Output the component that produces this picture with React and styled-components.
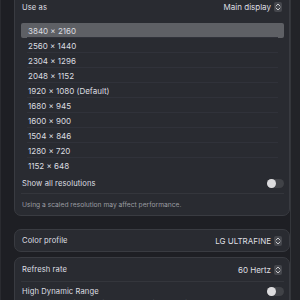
import React, { useState } from "react";
import styled, { createGlobalStyle } from "styled-components";

const resolutions = [
  "3840 × 2160",
  "2560 × 1440",
  "2304 × 1296",
  "2048 × 1152",
  "1920 × 1080 (Default)",
  "1680 × 945",
  "1600 × 900",
  "1504 × 846",
  "1280 × 720",
  "1152 × 648",
];

function Stepper() {
  return (
    <StepBox>
      <svg width="6" height="8" viewBox="0 0 6 8" fill="none">
        <path d="M1 3 L3 1 L5 3" stroke="#d6d6d8" strokeWidth="0.9" strokeLinecap="round" strokeLinejoin="round" />
        <path d="M1 5 L3 7 L5 5" stroke="#d6d6d8" strokeWidth="0.9" strokeLinecap="round" strokeLinejoin="round" />
      </svg>
    </StepBox>
  );
}

function App() {
  const [selected, setSelected] = useState(0);
  const [showAll, setShowAll] = useState(false);
  const [hdr, setHdr] = useState(false);

  return (
    <>
      <GlobalStyle />
      <Page>
        <Content>
          <Card>
            <Row h={26} pad="6px 2px 0 1px">
              <Label>Use as</Label>
              <Value>
                Main display <Stepper />
              </Value>
            </Row>
            <List>
              {resolutions.map((r, i) => (
                <ListItem key={r} active={i === selected} onClick={() => setSelected(i)}>
                  {r}
                </ListItem>
              ))}
            </List>
            <Row h={20}>
              <Label>Show all resolutions</Label>
              <Toggle on={showAll} onClick={() => setShowAll(!showAll)} />
            </Row>
            <Caption>Using a scaled resolution may affect performance.</Caption>
          </Card>

          <Card top={13}>
            <Row h={21} pad="0 2px 0 1px">
              <Label>Color profile</Label>
              <Value>
                LG ULTRAFINE <Stepper />
              </Value>
            </Row>
          </Card>

          <Card top={5}>
            <Row h={24} pad="0 2px 0 1px" divided>
              <Label>Refresh rate</Label>
              <Value>
                60 Hertz <Stepper />
              </Value>
            </Row>
            <Row h={30} align="flex-start" pad="5px 0 0 1px">
              <HdrText>
                <Label>High Dynamic Range</Label>
                <Sub>Automatically adjust the display to show high dynamic range content.</Sub>
              </HdrText>
              <Toggle on={hdr} onClick={() => setHdr(!hdr)} />
            </Row>
          </Card>
        </Content>
        <ScrollTrack />
      </Page>
    </>
  );
}

export default App;

const GlobalStyle = createGlobalStyle`
  html, body {
    margin: 0;
    padding: 0;
    background: #1e1f24;
    font-family: Inter, "Liberation Sans", sans-serif;
    -webkit-font-smoothing: antialiased;
  }
`;

const Page = styled.div`
  width: 300px;
  height: 300px;
  overflow: hidden;
  display: flex;
  background: #1e1f24;
  border-left: 1px solid #2a2b30;
  box-sizing: border-box;
`;

const Content = styled.div`
  flex: 1;
  padding-left: 13px;
  margin-top: -10px;
  display: flex;
  flex-direction: column;
`;

const ScrollTrack = styled.div`
  width: 9px;
  border-left: 1px solid #34363b;
  background: #222328;
`;

const Card = styled.div`
  margin-top: ${(p) => p.top || 0}px;
  background: #292b31;
  border: 1px solid #393b41;
  border-radius: 7px;
  padding: 0 5px 0 6px;
  flex-shrink: 0;
`;

const Row = styled.div`
  display: flex;
  align-items: ${(p) => p.align || "center"};
  justify-content: space-between;
  height: ${(p) => p.h}px;
  padding: ${(p) => p.pad || "0 0 0 1px"};
  box-sizing: border-box;
  border-bottom: ${(p) => (p.divided ? "1px solid #34363c" : "none")};
`;

const Label = styled.span`
  color: #dedfe2;
  font-size: 7.6px;
  letter-spacing: 0.1px;
`;

const Value = styled.span`
  display: flex;
  align-items: center;
  gap: 3px;
  color: #dedfe2;
  font-size: 8px;
`;

const StepBox = styled.span`
  display: inline-flex;
  align-items: center;
  justify-content: center;
  width: 8px;
  height: 10px;
  border-radius: 2px;
  background: #45474d;
`;

const List = styled.div`
  margin-top: 6px;
  display: flex;
  flex-direction: column;
`;

const ListItem = styled.div`
  height: 15px;
  display: flex;
  align-items: center;
  padding-left: 7px;
  font-size: 8px;
  color: #dcdde0;
  cursor: default;
  position: relative;
  background: ${(p) => (p.active ? "#5e6065" : "transparent")};
  border-radius: ${(p) => (p.active ? "2px" : "0")};
  &::after {
    content: "";
    position: absolute;
    left: 6px;
    right: 6px;
    bottom: 0;
    border-bottom: 1px solid #30323a;
  }
  &:last-child::after {
    display: none;
  }
`;

const Toggle = styled.div`
  flex-shrink: 0;
  width: 17px;
  height: 9px;
  border-radius: 5px;
  background: ${(p) => (p.on ? "#2f7cf6" : "#404247")};
  position: relative;
  &::after {
    content: "";
    position: absolute;
    top: 0;
    left: ${(p) => (p.on ? "8px" : "0")};
    width: 9px;
    height: 9px;
    border-radius: 50%;
    background: #dcdcde;
  }
`;

const Caption = styled.div`
  border-top: 1px solid #34363c;
  height: 21px;
  display: flex;
  align-items: center;
  padding-left: 1px;
  font-size: 6.7px;
  color: #9a9ca1;
`;

const HdrText = styled.div`
  display: flex;
  flex-direction: column;
  gap: 3px;
`;

const Sub = styled.span`
  font-size: 6.6px;
  color: #9a9ca1;
  white-space: nowrap;
`;
